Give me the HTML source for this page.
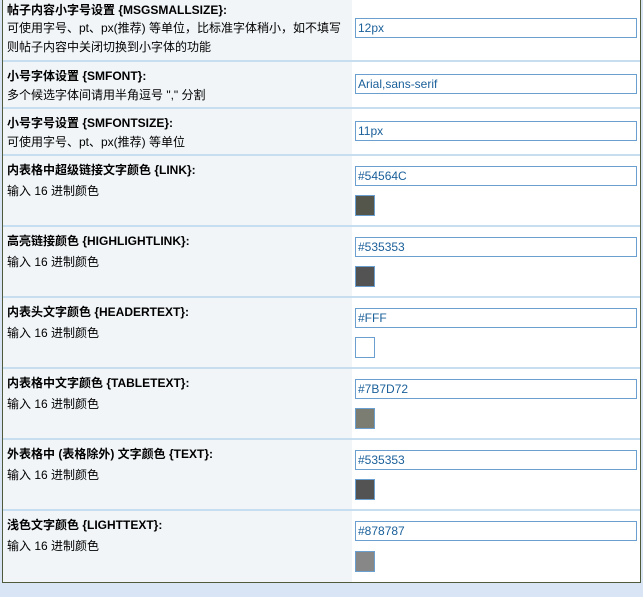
<!DOCTYPE html>
<html><head><meta charset="utf-8"><style>
body{margin:0;width:643px;height:597px;background:#d9e4f5;position:relative;overflow:hidden;font-family:"Liberation Sans","Noto Sans CJK SC",sans-serif;font-size:12px;color:#000}
#box{position:absolute;left:2px;top:-2px;width:637px;height:584px;border:1px solid #4f5a3a;border-top:none;background:#fff}
.row{position:absolute;left:0;width:637px;border-bottom:2px solid #c6def0}
.l{position:absolute;left:0;top:0;bottom:0;width:349px;background:#f1f5f8;padding:0 0 0 4px;box-sizing:border-box}
.t{font-weight:bold;margin-top:5px;line-height:18px}
.d{line-height:20px;margin-top:2px}
.in{position:absolute;left:352px;width:278px;height:18px;border:1px solid #6a9fd0;color:#1a5f9a;font-size:12px;line-height:18px;padding-left:2px;background:#fff}
.sw{position:absolute;left:352px;width:18px;height:19px;border:1px solid #6a9fd0}
</style></head><body><div id="box">
<div class="row" style="top:0;height:62px"><div class="l"><div class="t" style="margin-top:3px">帖子内容小字号设置 {MSGSMALLSIZE}:</div><div class="d" style="line-height:19px;margin-top:0">可使用字号、pt、px(推荐) 等单位，比标准字体稍小，如不填写<br>则帖子内容中关闭切换到小字体的功能</div></div><div class="in" style="top:20px">12px</div></div>
<div class="row" style="top:64px;height:45px"><div class="l"><div class="t">小号字体设置 {SMFONT}:</div><div class="d" style="margin-top:0">多个候选字体间请用半角逗号 "," 分割</div></div><div class="in" style="top:12px">Arial,sans-serif</div></div>
<div class="row" style="top:111px;height:45px"><div class="l"><div class="t">小号字号设置 {SMFONTSIZE}:</div><div class="d" style="margin-top:0">可使用字号、pt、px(推荐) 等单位</div></div><div class="in" style="top:12px">11px</div></div>
<div class="row" style="top:158px;height:69px"><div class="l"><div class="t">内表格中超级链接文字颜色 {LINK}:</div><div class="d">输入 16 进制颜色</div></div><div class="in" style="top:10px">#54564C</div><div class="sw" style="top:39px;background:#54564C"></div></div>
<div class="row" style="top:229px;height:69px"><div class="l"><div class="t">高亮链接颜色 {HIGHLIGHTLINK}:</div><div class="d">输入 16 进制颜色</div></div><div class="in" style="top:10px">#535353</div><div class="sw" style="top:39px;background:#535353"></div></div>
<div class="row" style="top:300px;height:69px"><div class="l"><div class="t">内表头文字颜色 {HEADERTEXT}:</div><div class="d">输入 16 进制颜色</div></div><div class="in" style="top:10px">#FFF</div><div class="sw" style="top:39px;background:#fff"></div></div>
<div class="row" style="top:371px;height:69px"><div class="l"><div class="t">内表格中文字颜色 {TABLETEXT}:</div><div class="d">输入 16 进制颜色</div></div><div class="in" style="top:10px">#7B7D72</div><div class="sw" style="top:39px;background:#7B7D72"></div></div>
<div class="row" style="top:442px;height:69px"><div class="l"><div class="t">外表格中 (表格除外) 文字颜色 {TEXT}:</div><div class="d">输入 16 进制颜色</div></div><div class="in" style="top:10px">#535353</div><div class="sw" style="top:39px;background:#535353"></div></div>
<div class="row" style="top:513px;height:71px;border-bottom:none"><div class="l"><div class="t">浅色文字颜色 {LIGHTTEXT}:</div><div class="d">输入 16 进制颜色</div></div><div class="in" style="top:10px">#878787</div><div class="sw" style="top:40px;background:#878787"></div></div>
</div></body></html>
